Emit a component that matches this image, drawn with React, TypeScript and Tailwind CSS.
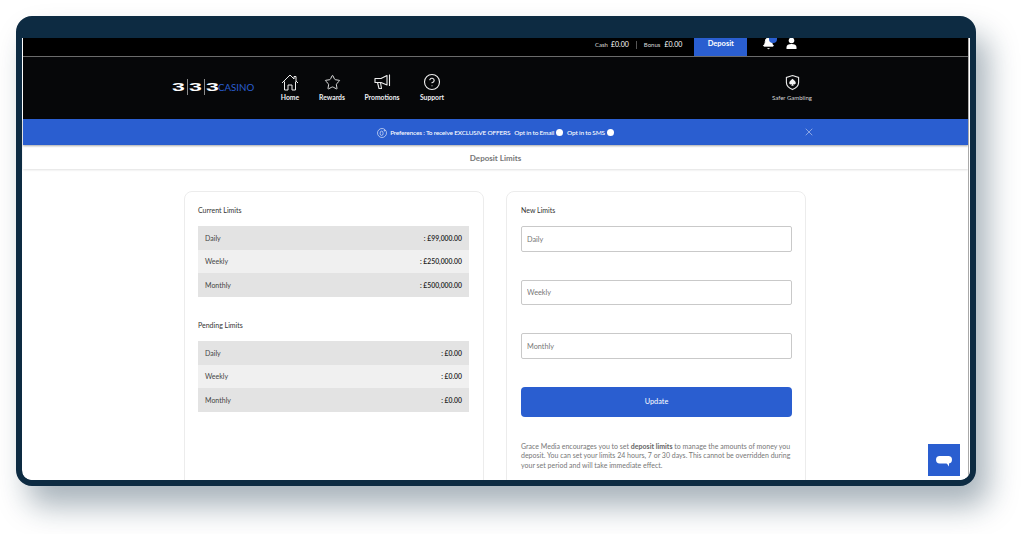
import { Bell, CircleHelp, Star, X } from "lucide-react";

const NavItem = ({ icon, label, width }: { icon: React.ReactNode; label: string; width: string }) => (
  <div className={`flex flex-col items-center ${width}`}>
    <div className="h-[20px] flex items-center justify-center">{icon}</div>
    <span className="mt-[1px] text-[6.8px] leading-[9px] font-bold text-[#eef0f4] whitespace-nowrap">{label}</span>
  </div>
);

const Logo = () => (
  <div className="flex items-center h-[16px] w-[82px] font-['Liberation_Sans',sans-serif]">
    {["3", "3", "3"].map((n, i) => (
      <div key={i} className="flex items-center">
        <span className="w-[13px] text-center text-[11px] leading-[12px] font-bold text-white scale-x-[2.1]">{n}</span>
        {i < 2 && <span className="w-px h-[16px] bg-[#8a8a8a] mx-[1.5px]" />}
      </div>
    ))}
    <span className="-ml-[1px] text-[9.7px] leading-[12px] text-[#2a5ed0] font-['Lato',sans-serif]">CASINO</span>
  </div>
);

const HomeIcon = () => (
  <svg width="18" height="17" viewBox="0 0 18 17" fill="none" stroke="#ededed" strokeWidth="1" strokeLinejoin="round">
    <path d="M1 9 L9 1 L13 5 V2.500 H15 V7 L17 9" />
    <path d="M3.500 7.500 V16 H7 V11 H11 V16 H14.500 V7.500" />
  </svg>
);

const MegaphoneIcon = () => (
  <svg width="17" height="16" viewBox="0 0 17 16" fill="none" stroke="#ededed" strokeWidth="1.1" strokeLinejoin="round">
    <path d="M1 4.500 H7 L13 1.500 V11 L7 8.500 H1 Z" />
    <path d="M15.500 0.500 V12" />
    <path d="M3.500 8.500 L5 14.500 H7.500 L6.500 8.500" />
  </svg>
);

const SafeIcon = () => (
  <svg width="15" height="17" viewBox="0 0 16 17" fill="none">
    <path d="M8 1 L14.500 3 V8.500 C14.500 12 11.500 14.500 8 16 C4.500 14.500 1.500 12 1.500 8.500 V3 Z" stroke="#e8e8e8" strokeWidth="1.2" />
    <path d="M8 4.500 C9.500 6 11.500 7 11.500 9 C11.500 10.500 9.700 11 8.700 10 L9.300 12 H6.700 L7.300 10 C6.300 11 4.500 10.500 4.500 9 C4.500 7 6.500 6 8 4.500 Z" fill="#f2f2f2" />
  </svg>
);

const LimitTable = ({ rows }: { rows: [string, string][] }) => (
  <div className="flex flex-col">
    {rows.map(([name, value], i) => (
      <div
        key={name}
        className={`h-[23.67px] px-[7px] flex items-center justify-between leading-[10px] ${i % 2 === 0 ? "bg-[#e3e3e3]" : "bg-[#f0f0f0]"}`}
      >
        <span className="text-[7px] text-[#444]">{name}</span>
        <span className="text-[6.8px] text-[#222] font-semibold">{value}</span>
      </div>
    ))}
  </div>
);

const LimitInput = ({ label }: { label: string }) => (
  <input
    placeholder={label}
    className="block w-full h-[25.5px] mb-[28px] px-[5px] pt-[1px] rounded-[2px] border border-[#c9c9c9] bg-white text-[7.3px] outline-none placeholder:text-[#777]"
  />
);

export default function App() {
  return (
    <div className="w-[1024px] h-[534px] bg-white pt-4 pl-4 overflow-hidden font-['Lato',sans-serif]">
      <div className="relative w-[960px] h-[470px] border-x-[6px] border-t-[22px] border-b-[6px] border-[#0d2b42] rounded-[16px] overflow-hidden bg-white shadow-[12px_20px_30px_rgba(13,43,66,0.36)]">
        <div className="h-full ml-px mr-[2px] bg-white">
          {/* Top bar */}
          <div className="h-[18px] bg-black flex text-white overflow-hidden">
            <div className="ml-[572px] h-[13px] flex items-center text-[6px] text-[#ddd]">
              <span>Cash</span>
              <span className="ml-[3px] text-[7px] text-white">£0.00</span>
              <span className="mx-[7px] w-px h-[8px] bg-[#555]" />
              <span>Bonus</span>
              <span className="ml-[4px] text-[7px] text-white">£0.00</span>
            </div>
            <div className="ml-[12px] w-[53px] bg-[#2a5ed0] h-full flex items-center justify-center pb-[6px] text-[7.5px] font-bold">Deposit</div>
            <div className="relative ml-[15px] w-[13px] h-[12px]">
              <Bell size={13} fill="white" strokeWidth={1.5} className="-mt-[1px]" />
              <span className="absolute -top-[3px] left-[7px] w-[8px] h-[8px] rounded-full bg-[#2a5ed0]" />
            </div>
            <div className="ml-[11px] w-[11px] h-[12px]">
              <svg width="11" height="12" viewBox="0 0 11 12" fill="white">
                <circle cx="5.500" cy="2.500" r="2.800" />
                <path d="M0.500 11 V9 C0.500 7 2.500 6 5.500 6 C8.500 6 10.500 7 10.500 9 V11 Z" />
              </svg>
            </div>
          </div>

          {/* Main nav */}
          <div className="h-[63px] border-t border-[#6b6b6b] bg-[#060709] flex items-start pt-[15px]">
            <div className="ml-[149px] mt-[7px]"><Logo /></div>
            <NavItem width="w-[30px] ml-[21px]" label="Home" icon={<HomeIcon />} />
            <NavItem width="w-[40px] ml-[7px]" label="Rewards" icon={<Star size={17} color="#ededed" strokeWidth={1.3} />} />
            <NavItem width="w-[44px] ml-[8px]" label="Promotions" icon={<MegaphoneIcon />} />
            <NavItem width="w-[30px] ml-[13px]" label="Support" icon={<CircleHelp size={18} color="#ededed" strokeWidth={1.5} />} />
            <div className="ml-[315px] w-[60px] flex flex-col items-center">
              <div className="h-[20px] flex items-center"><SafeIcon /></div>
              <span className="mt-[1px] text-[6px] leading-[9px] text-[#d8d8d8] whitespace-nowrap">Safer Gambling</span>
            </div>
          </div>

          {/* Preferences */}
          <div className="h-[26px] pt-[1px] bg-[#2a5ed0] grid grid-cols-[1fr_auto_1fr] items-center text-white text-[6.5px] font-medium tracking-[-0.2px] shadow-[0_1px_2px_rgba(0,0,0,0.35)]">
            <div />
            <div className="flex items-center whitespace-nowrap">
              <svg width="10" height="10" viewBox="0 0 10 10" fill="none" stroke="white" strokeWidth="0.6" className="mr-[3px]">
                <circle cx="5" cy="5" r="4.500" />
                <ellipse cx="4.600" cy="5.300" rx="1.500" ry="2.200" />
                <circle cx="7.600" cy="2.600" r="0.500" />
              </svg>
              <span>Preferences : To receive EXCLUSIVE OFFERS</span>
              <span className="ml-[4px]">Opt in to Email</span>
              <span className="ml-[2px] w-[7px] h-[7px] rounded-full bg-white" />
              <span className="ml-[4px]">Opt in to SMS</span>
              <span className="ml-[2px] w-[7px] h-[7px] rounded-full bg-white" />
            </div>
            <div className="flex justify-end pr-[153px] -mt-[1px]">
              <X size={12} strokeWidth={1} color="#e8edf8" />
            </div>
          </div>

          {/* Page title */}
          <div className="h-[24px] pt-[1px] flex items-center justify-center text-[8px] font-bold text-[#777] shadow-[0_1px_2px_rgba(0,0,0,0.12)]">
            Deposit Limits
          </div>

          {/* Cards */}
          <div className="flex justify-center gap-[22px] pt-[22px] pr-[1px]">
            <div className="w-[300px] h-[320px] rounded-[8px] border border-[#ececec] pl-[13px] pr-[14px] pt-[12px]">
              <p className="h-[12px] leading-[12px] text-[7px] text-[#333]">Current Limits</p>
              <div className="mt-[10px]">
                <LimitTable rows={[["Daily", ": £99,000.00"], ["Weekly", ": £250,000.00"], ["Monthly", ": £500,000.00"]]} />
              </div>
              <p className="mt-[22px] h-[12px] leading-[12px] text-[7px] text-[#333]">Pending Limits</p>
              <div className="mt-[10px]">
                <LimitTable rows={[["Daily", ": £0.00"], ["Weekly", ": £0.00"], ["Monthly", ": £0.00"]]} />
              </div>
            </div>
            <div className="w-[300px] h-[320px] rounded-[8px] border border-[#ececec] pl-[14px] pr-[13px] pt-[12px]">
              <p className="h-[12px] leading-[12px] text-[7px] text-[#333]">New Limits</p>
              <div className="mt-[10px]">
                <LimitInput label="Daily" />
                <LimitInput label="Weekly" />
                <LimitInput label="Monthly" />
              </div>
              <button className="block w-full h-[30px] pt-[2px] rounded-[4px] bg-[#2a5ed0] text-white text-[7.3px]">Update</button>
              <p className="mt-[25px] text-[7px] leading-[9.7px] text-[#777]">
                Grace Media encourages you to set <b className="font-bold text-[#666]">deposit limits</b> to manage the amounts of money you deposit. You can set your limits 24 hours, 7 or 30 days. This cannot be overridden during your set period and will take immediate effect.
              </p>
            </div>
          </div>
        </div>

        {/* Grey edge on the right */}
        <div className="absolute top-0 bottom-0 right-0 w-[2px] bg-white border-l border-[#aaa]" />

        {/* Chat launcher */}
        <div className="absolute right-[10px] bottom-[4px] w-[32px] h-[32px] bg-[#2a5ed0] flex items-center justify-center">
          <svg width="18" height="14" viewBox="0 0 18 14" fill="white">
            <rect x="1" y="3" width="16" height="7.500" rx="3.700" />
            <path d="M11.500 10 L14 10 L14 13.500 Z" />
          </svg>
        </div>
      </div>
    </div>
  );
}
